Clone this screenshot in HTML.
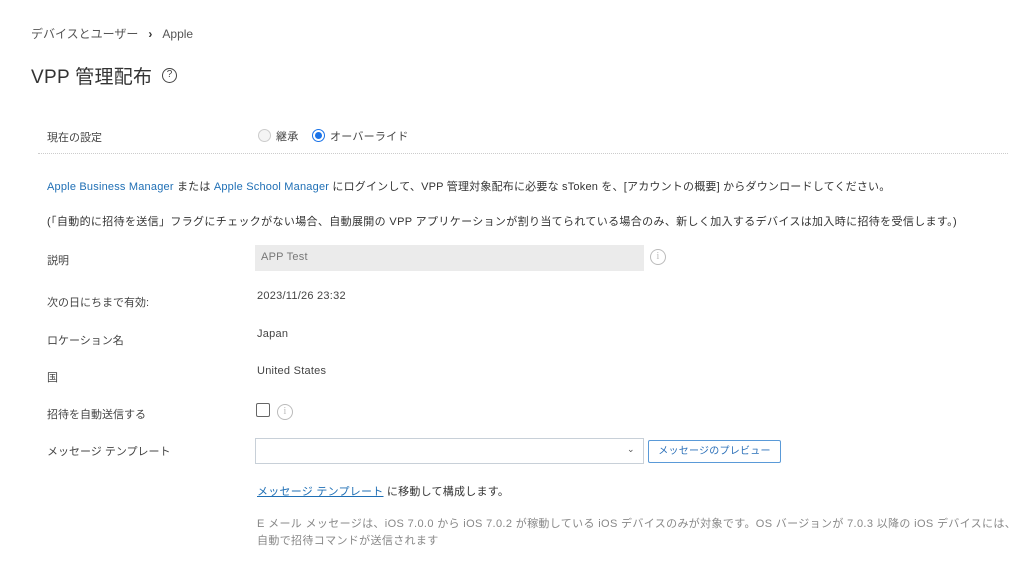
<!DOCTYPE html>
<html><head><meta charset="utf-8"><style>
*{box-sizing:border-box;margin:0;padding:0}
body{width:1024px;height:571px;background:#fff;font-family:"Liberation Sans","Noto Sans CJK JP",sans-serif;color:#333;font-size:11px;position:relative;overflow:hidden;letter-spacing:0.25px}
.a{position:absolute;white-space:nowrap}
.lbl{left:47px;color:#444;letter-spacing:0}
.val{left:257px;color:#444}
a{color:#1f6fb5;text-decoration:none}
.info{position:absolute;width:16px;height:16px;border:1px solid #bbb;border-radius:50%;color:#bbb;font-size:10px;text-align:center;line-height:14px;font-family:"Liberation Serif",serif}
</style></head><body>
<div class="a" style="left:31px;top:25px;font-size:12px;color:#555;letter-spacing:0">デバイスとユーザー&nbsp;&nbsp;&nbsp;<b style="color:#333">›</b>&nbsp;&nbsp;&nbsp;Apple</div>
<div class="a" style="left:31px;top:62px;font-size:19px;color:#333;letter-spacing:0.3px">VPP 管理配布</div>
<div class="a" style="left:162px;top:68px;width:15px;height:15px;border:1.5px solid #444;border-radius:50%;font-size:10px;text-align:center;line-height:12px;color:#444;letter-spacing:0">?</div>
<div class="a lbl" style="top:129px">現在の設定</div>
<div class="a" style="left:258px;top:129px;width:13px;height:13px;border:1px solid #ccc;border-radius:50%;background:#f4f4f4"></div>
<div class="a" style="left:276px;top:128px;color:#444">継承</div>
<div class="a" style="left:312px;top:129px;width:13px;height:13px;border:1px solid #1a73e8;border-radius:50%;"><div style="margin:2px;width:7px;height:7px;border-radius:50%;background:#1a73e8"></div></div>
<div class="a" style="left:330px;top:128px;color:#444">オーバーライド</div>
<div class="a" style="left:38px;top:153px;width:970px;border-top:1px dotted #ccc"></div>
<div class="a" style="left:47px;top:178px;color:#333;letter-spacing:0.2px"><a>Apple Business Manager</a> または <a>Apple School Manager</a> にログインして、VPP 管理対象配布に必要な sToken を、[アカウントの概要] からダウンロードしてください。</div>
<div class="a" style="left:47px;top:213px;color:#333;letter-spacing:0.35px">(「自動的に招待を送信」フラグにチェックがない場合、自動展開の VPP アプリケーションが割り当てられている場合のみ、新しく加入するデバイスは加入時に招待を受信します。)</div>
<div class="a lbl" style="top:252px">説明</div>
<div class="a" style="left:255px;top:245px;width:389px;height:26px;background:#ebebeb;padding:6px 6px;color:#777">APP Test</div>
<div class="info" style="left:650px;top:249px">i</div>
<div class="a lbl" style="top:294px">次の日にちまで有効:</div>
<div class="a val" style="top:290px">2023/11/26 23:32</div>
<div class="a lbl" style="top:332px">ロケーション名</div>
<div class="a val" style="top:328px">Japan</div>
<div class="a lbl" style="top:369px">国</div>
<div class="a val" style="top:365px">United States</div>
<div class="a lbl" style="top:406px">招待を自動送信する</div>
<div class="a" style="left:256px;top:403px;width:14px;height:14px;border:1.5px solid #666;border-radius:2px"></div>
<div class="info" style="left:277px;top:404px">i</div>
<div class="a lbl" style="top:443px">メッセージ テンプレート</div>
<div class="a" style="left:255px;top:438px;width:389px;height:26px;border:1px solid #c8d0d8"></div>
<div class="a" style="left:627px;top:444px;font-size:9px;color:#555">⌄</div>
<div class="a" style="left:648px;top:440px;width:133px;height:23px;border:1px solid #5a9ad8;border-radius:2px;color:#2a6fb8;font-size:10px;text-align:center;line-height:21px">メッセージのプレビュー</div>
<div class="a" style="left:257px;top:483px;color:#333"><a style="text-decoration:underline">メッセージ テンプレート</a> に移動して構成します。</div>
<div class="a" style="left:257px;top:516px;color:#888;line-height:17px;letter-spacing:0.35px">E メール メッセージは、iOS 7.0.0 から iOS 7.0.2 が稼動している iOS デバイスのみが対象です。OS バージョンが 7.0.3 以降の iOS デバイスには、<br>自動で招待コマンドが送信されます</div>
</body></html>
